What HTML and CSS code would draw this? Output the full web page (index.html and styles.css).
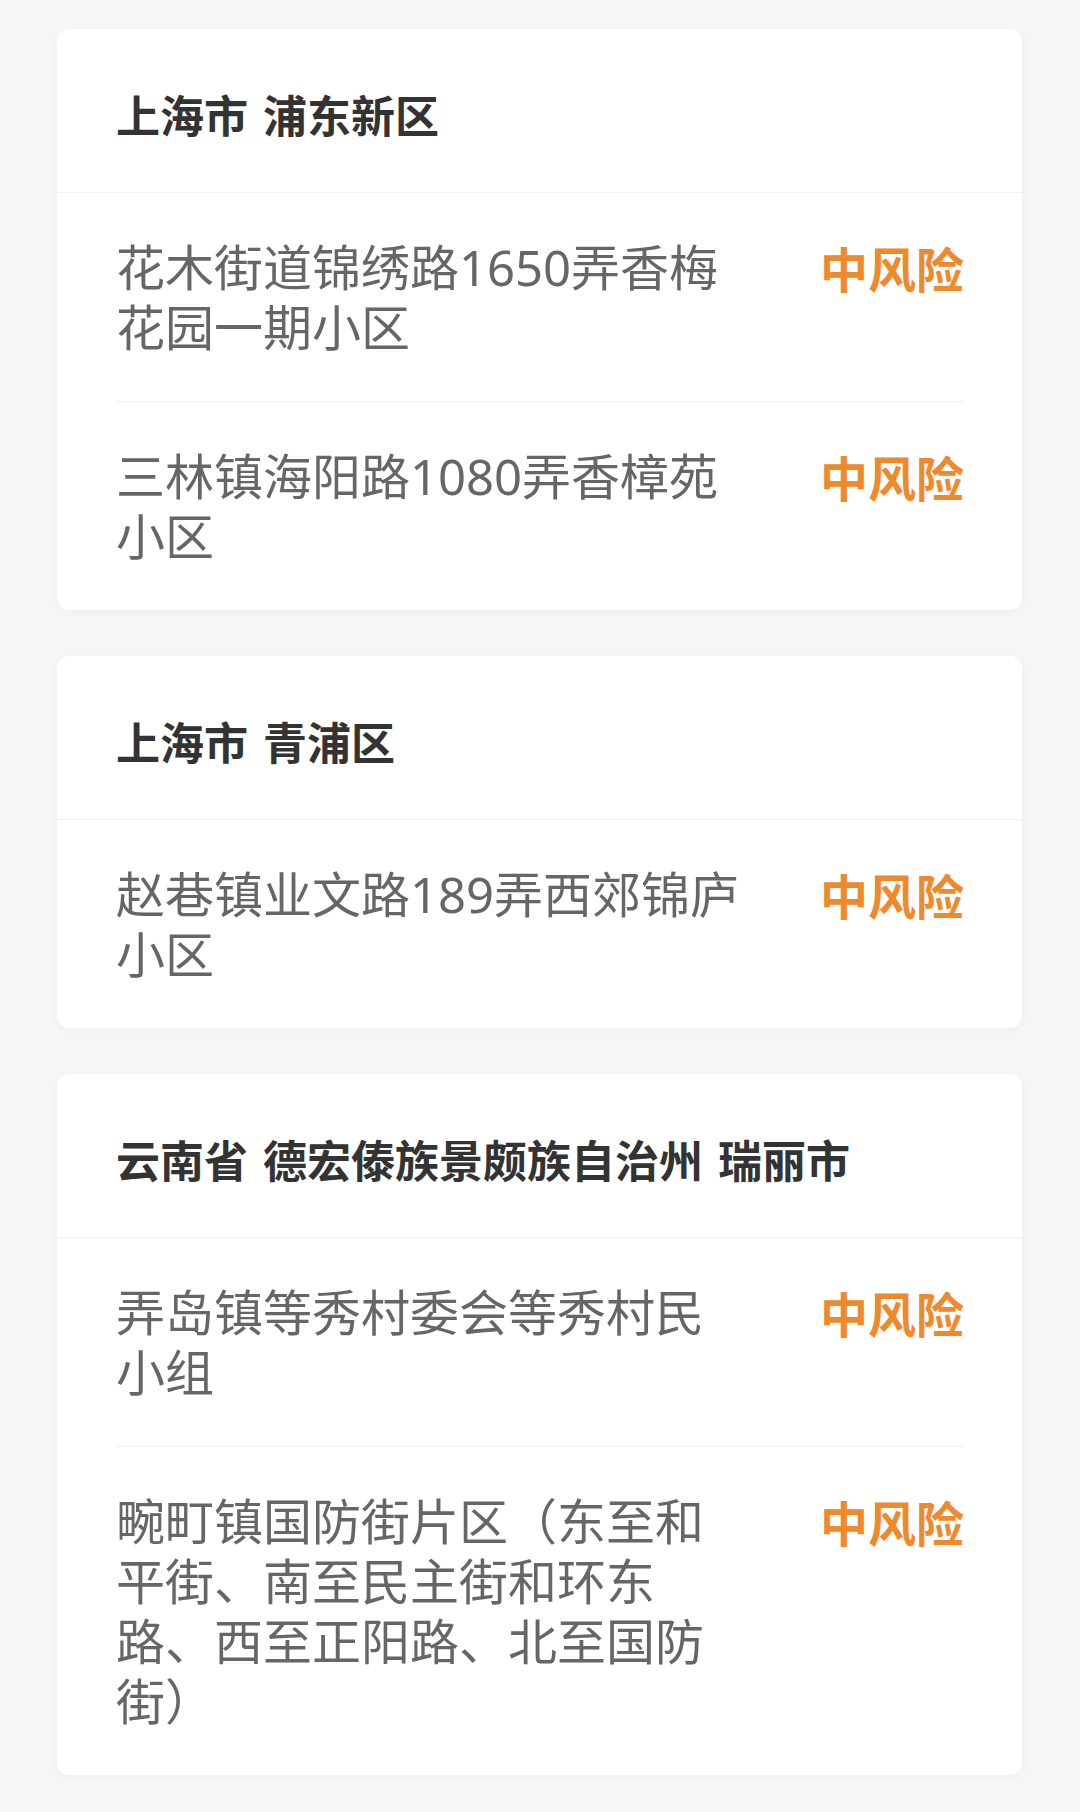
FILE: index.html
```html
<!DOCTYPE html>
<html lang="zh-CN">
<head>
<meta charset="utf-8">
<title>风险地区</title>
<link rel="stylesheet" href="styles.css">
</head>
<body>
<main class="page">
  <section class="card">
    <h2 class="card-title">上海市 浦东新区</h2>
    <ul class="list">
      <li class="item"><span class="addr">花木街道锦绣路1650弄香梅花园一期小区</span><span class="risk">中风险</span></li>
      <li class="item"><span class="addr">三林镇海阳路1080弄香樟苑小区</span><span class="risk">中风险</span></li>
    </ul>
  </section>
  <section class="card">
    <h2 class="card-title">上海市 青浦区</h2>
    <ul class="list">
      <li class="item"><span class="addr">赵巷镇业文路189弄西郊锦庐小区</span><span class="risk">中风险</span></li>
    </ul>
  </section>
  <section class="card">
    <h2 class="card-title">云南省 德宏傣族景颇族自治州 瑞丽市</h2>
    <ul class="list">
      <li class="item"><span class="addr">弄岛镇等秀村委会等秀村民小组</span><span class="risk">中风险</span></li>
      <li class="item"><span class="addr">畹町镇国防街片区（东至和平街、南至民主街和环东路、西至正阳路、北至国防街）</span><span class="risk">中风险</span></li>
    </ul>
  </section>
</main>
</body>
</html>
```

FILE: styles.css
```css
html, body {
  margin: 0;
  padding: 0;
  background: #f6f6f6;
}

body {
  font-family: "Noto Sans CJK SC", "Noto Sans", sans-serif;
}

.page {
  display: flex;
  flex-direction: column;
  gap: 46px;
  padding: 29px 58px 37px 57px;
}

.card {
  background: #ffffff;
  border-radius: 12px;
  box-shadow: 0 2px 10px rgba(0, 0, 0, 0.035);
}

.card-title {
  margin: 0;
  padding: 55px 58px 48px 59px;
  font-size: 44px;
  line-height: 60px;
  font-weight: 700;
  word-spacing: 5px;
  color: #333333;
  border-bottom: 1px solid #f1f1f1;
}

.list {
  list-style: none;
  margin: 0 58px 0 59px;
  padding: 0;
}

.item {
  display: flex;
  justify-content: space-between;
  align-items: flex-start;
  padding: 44px 0;
  border-bottom: 1px solid #f1f1f1;
}

.item:last-child {
  border-bottom: none;
}

.addr {
  width: 632px;
  font-family: "Noto Sans", "Noto Sans CJK SC", sans-serif;
  font-size: 49px;
  line-height: 60px;
  color: #666666;
}

.risk {
  font-size: 48px;
  line-height: 60px;
  font-weight: 700;
  color: #ef8a2c;
  white-space: nowrap;
}
```
